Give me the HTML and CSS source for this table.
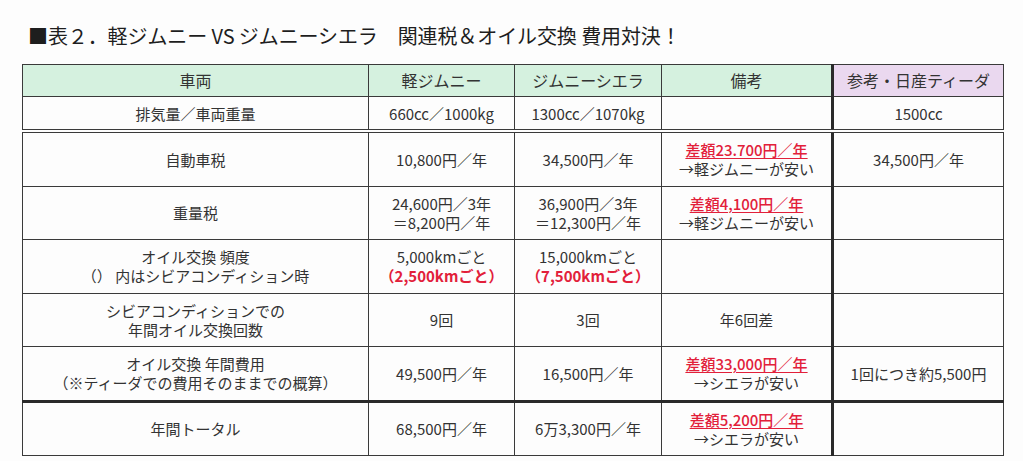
FILE: index.html
```html
<!DOCTYPE html>
<html lang="ja">
<head>
<meta charset="utf-8">
<link rel="stylesheet" href="styles.css">
</head>
<body>
<h1 class="title">■表２．軽ジムニー VS ジムニーシエラ　関連税＆オイル交換 費用対決！</h1>
<table class="cmp">
  <colgroup>
    <col class="c1"><col class="c2"><col class="c3"><col class="c4"><col class="c5">
  </colgroup>
  <tr class="head">
    <th>車両</th><th>軽ジムニー</th><th>ジムニーシエラ</th><th class="sep">備考</th><th class="ref">参考・日産ティーダ</th>
  </tr>
  <tr class="r1 dbl">
    <td>排気量／車両重量</td><td>660cc／1000kg</td><td>1300cc／1070kg</td><td class="sep"></td><td>1500cc</td>
  </tr>
  <tr class="r2">
    <td>自動車税</td><td>10,800円／年</td><td>34,500円／年</td><td class="sep"><span class="diff">差額23.700円／年</span><br>→軽ジムニーが安い</td><td>34,500円／年</td>
  </tr>
  <tr class="r2">
    <td>重量税</td><td>24,600円／3年<br>＝8,200円／年</td><td>36,900円／3年<br>＝12,300円／年</td><td class="sep"><span class="diff">差額4,100円／年</span><br>→軽ジムニーが安い</td><td></td>
  </tr>
  <tr class="r2">
    <td>オイル交換 頻度<br>（） 内はシビアコンディション時</td><td>5,000kmごと<br><span class="red">（2,500kmごと）</span></td><td>15,000kmごと<br><span class="red">（7,500kmごと）</span></td><td class="sep"></td><td></td>
  </tr>
  <tr class="r2">
    <td>シビアコンディションでの<br>年間オイル交換回数</td><td>9回</td><td>3回</td><td class="sep">年6回差</td><td></td>
  </tr>
  <tr class="r2 thick">
    <td>オイル交換 年間費用<br>（※ティーダでの費用そのままでの概算）</td><td>49,500円／年</td><td>16,500円／年</td><td class="sep"><span class="diff">差額33,000円／年</span><br>→シエラが安い</td><td>1回につき約5,500円</td>
  </tr>
  <tr class="r2">
    <td>年間トータル</td><td>68,500円／年</td><td>6万3,300円／年</td><td class="sep"><span class="diff">差額5,200円／年</span><br>→シエラが安い</td><td></td>
  </tr>
</table>
</body>
</html>
```
FILE: styles.css
```css
html, body {
  margin: 0;
  padding: 0;
  background: #fdfdfd;
}
body {
  width: 1023px;
  height: 461px;
  overflow: hidden;
  font-family: "Noto Sans CJK JP", "Noto Sans", sans-serif;
  color: #333333;
}
.title {
  margin: 0;
  padding: 24px 0 0 28px;
  height: 64px;
  box-sizing: border-box;
  font-size: 20px;
  line-height: 24px;
  font-weight: 400;
  color: #1e1e1e;
  letter-spacing: -0.1px;
}
.cmp {
  margin-left: 22px;
  border-collapse: collapse;
  table-layout: fixed;
  width: 981px;
  font-size: 15px;
  line-height: 19px;
}
.c1 { width: 346px; }
.c2 { width: 146px; }
.c3 { width: 147px; }
.c4 { width: 171px; }
.c5 { width: 171px; }
.cmp th, .cmp td {
  border: 1.5px solid #3a3a3a;
  text-align: center;
  vertical-align: middle;
  padding: 0;
}
.cmp th {
  font-weight: 400;
  font-size: 16px;
  height: 31px;
  background: #d5f1df;
}
.cmp th.ref {
  background: #ead8ef;
}
.cmp .sep {
  border-right: 3px solid #2a2a2a;
}
.r1 td { height: 32px; }
.r2 td { height: 52.5px; }
.dbl td { border-bottom: 4px double #3a3a3a; }
.thick td { border-bottom: 3px solid #2a2a2a; }
.diff {
  color: #e2203a;
  text-decoration: underline;
  text-underline-offset: 2px;
  font-weight: 500;
}
.red {
  color: #e2203a;
  font-weight: 700;
}
```
